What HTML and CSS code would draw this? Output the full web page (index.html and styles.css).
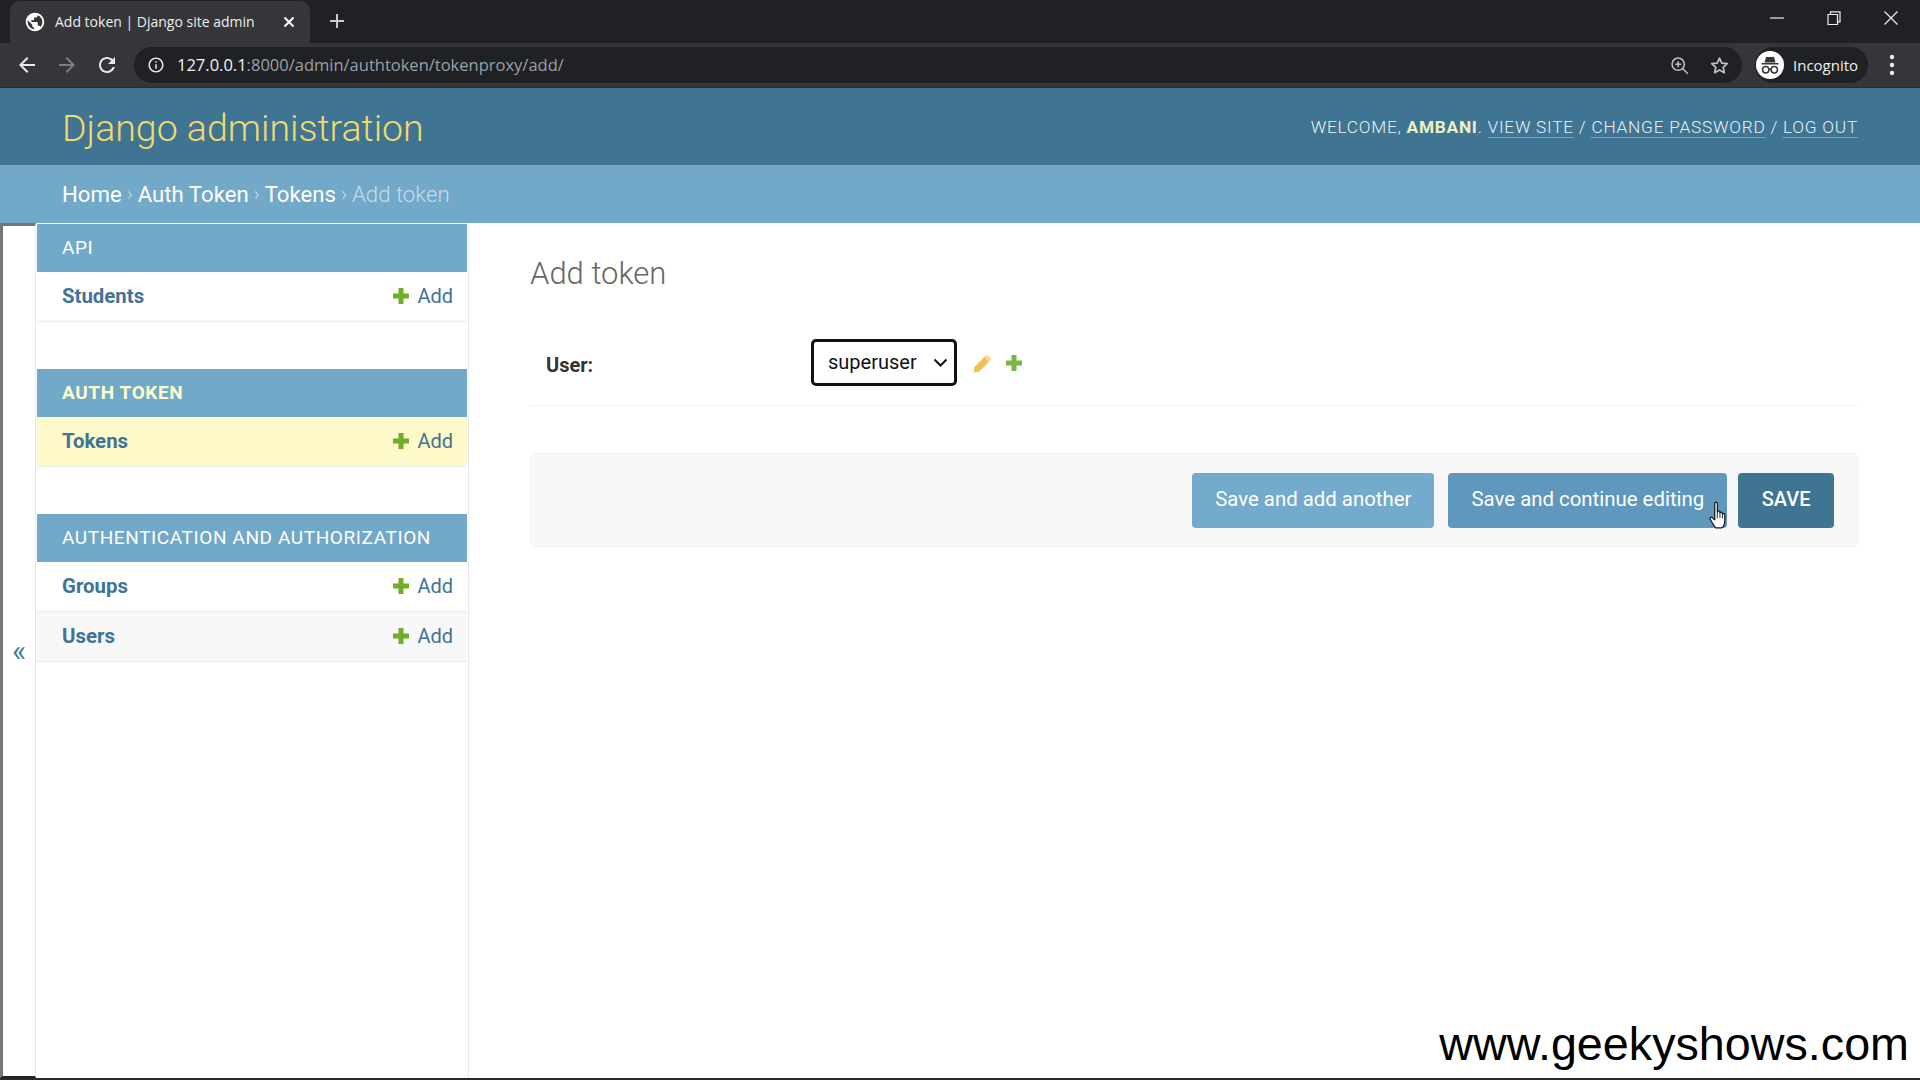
FILE: index.html
```html
<!DOCTYPE html>
<html lang="en">
<head>
<meta charset="UTF-8">
<title>Add token | Django site admin</title>
<link rel="stylesheet" href="styles.css">
</head>
<body>
<div class="tabstrip">
    <div class="tab">
        <svg class="tab-favicon" viewBox="0 0 24 24"><path fill="#fff" d="M12 2C6.48 2 2 6.48 2 12s4.48 10 10 10 10-4.48 10-10S17.52 2 12 2zm-1 17.93c-3.95-.49-7-3.85-7-7.93 0-.62.08-1.21.21-1.79L9 15v1c0 1.1.9 2 2 2v1.93zm6.9-2.54c-.26-.81-1-1.39-1.9-1.39h-1v-3c0-.55-.45-1-1-1H8v-2h2c.55 0 1-.45 1-1V7h2c1.1 0 2-.9 2-2v-.41c2.93 1.19 5 4.06 5 7.41 0 2.08-.8 3.97-2.1 5.39z"/></svg>
        <span class="tab-title">Add token | Django site admin</span>
        <svg class="tab-close" viewBox="0 0 12 12"><path d="M1.5 1.5l9 9M10.5 1.5l-9 9" stroke="#fff" stroke-width="2" fill="none"/></svg>
    </div>
    <svg class="new-tab" viewBox="0 0 16 16"><path d="M8 1v14M1 8h14" stroke="#c8cacd" stroke-width="2" fill="none"/></svg>
    <div class="window-btns">
        <svg viewBox="0 0 14 14"><path d="M0 7h14" stroke="#eee" stroke-width="1.2"/></svg>
        <svg viewBox="0 0 14 14"><path d="M1 3.5h9.500v10H1zM3.500 3.500V.8H13v10h-2.800" stroke="#eee" stroke-width="1.200" fill="none"/></svg>
        <svg viewBox="0 0 14 14"><path d="M.5.500l13 13M13.500.500l-13 13" stroke="#eee" stroke-width="1.200" fill="none"/></svg>
    </div>
</div>
<div class="toolbar">
    <svg class="nav-icon" viewBox="0 0 24 24"><path fill="#e8eaed" d="M20 11H7.830l5.590-5.590L12 4l-8 8 8 8 1.410-1.410L7.830 13H20v-2z"/></svg>
    <svg class="nav-icon dim" viewBox="0 0 24 24"><path fill="#7c7e81" d="M12 4l-1.410 1.410L16.170 11H4v2h12.170l-5.580 5.590L12 20l8-8z"/></svg>
    <svg class="nav-icon" viewBox="0 0 24 24"><path fill="#e8eaed" d="M17.650 6.350C16.200 4.900 14.210 4 12 4c-4.420 0-7.990 3.580-7.990 8s3.570 8 7.990 8c3.730 0 6.840-2.550 7.730-6h-2.080c-.82 2.330-3.040 4-5.650 4-3.310 0-6-2.690-6-6s2.690-6 6-6c1.660 0 3.140.69 4.220 1.780L13 11h7V4l-2.350 2.350z"/></svg>
    <div class="omnibox">
        <svg class="info-icon" viewBox="0 0 24 24"><path fill="#e8eaed" d="M11 7h2v2h-2zm0 4h2v6h-2zm1-9C6.480 2 2 6.480 2 12s4.480 10 10 10 10-4.480 10-10S17.520 2 12 2zm0 18c-4.410 0-8-3.590-8-8s3.590-8 8-8 8 3.590 8 8-3.590 8-8 8z"/></svg>
        <span class="url"><span class="url-host">127.0.0.1</span>:8000/admin/authtoken/tokenproxy/add/</span>
        <svg class="omni-icon" viewBox="0 0 24 24"><path d="M10.500 3.500a7 7 0 1 0 0 14 7 7 0 0 0 0-14zM15.500 15.500l6 6M10.500 7v7M7 10.500h7" stroke="#bdc1c6" stroke-width="1.800" fill="none"/></svg>
        <svg class="omni-icon" viewBox="0 0 24 24"><path d="M12 3.500l2.600 5.700 6.200.7-4.600 4.200 1.300 6.100-5.500-3.100-5.500 3.100 1.300-6.100-4.600-4.200 6.200-.7z" stroke="#bdc1c6" stroke-width="2" fill="none" stroke-linejoin="round"/></svg>
    </div>
    <div class="profile">
        <svg class="profile-icon" viewBox="0 0 28 28">
            <circle cx="14" cy="14" r="14" fill="#fff"/>
            <path fill="#35363a" d="M10 6h8l1.500 5.500H8.500zM5.500 12h17v1.400h-17z"/>
            <circle cx="9.700" cy="18.700" r="3.200" fill="none" stroke="#35363a" stroke-width="1.500"/>
            <circle cx="18.300" cy="18.700" r="3.200" fill="none" stroke="#35363a" stroke-width="1.500"/>
            <path d="M12.900 18.300h2.200" stroke="#35363a" stroke-width="1.500"/>
        </svg>
        <span>Incognito</span>
    </div>
    <svg class="menu-dots" viewBox="0 0 6 22"><circle cx="3" cy="3" r="2.200" fill="#e8eaed"/><circle cx="3" cy="11" r="2.200" fill="#e8eaed"/><circle cx="3" cy="19" r="2.200" fill="#e8eaed"/></svg>
</div>

<header class="site-header">
    <div class="branding">Django administration</div>
    <div class="user-tools">
        Welcome, <strong>ambani</strong>.
        <a href="#">View site</a> /
        <a href="#">Change password</a> /
        <a href="#">Log out</a>
    </div>
</header>
<div class="breadcrumbs">
    <a href="#">Home</a> <span class="sep">›</span> <a href="#">Auth Token</a> <span class="sep">›</span> <a href="#">Tokens</a> <span class="sep">›</span> Add token
</div>

<div class="main">
    <button class="toggle-nav" type="button">«</button>
    <nav class="sidebar">
        <div class="module">
            <div class="caption">API</div>
            <div class="model-row">
                <a class="model-name" href="#">Students</a>
                <a class="add-link" href="#"><svg class="plus" viewBox="0 0 16 16"><path d="M8 0v16M0 8h16" stroke="#6fad2a" stroke-width="5" fill="none"/></svg>Add</a>
            </div>
        </div>
        <div class="module">
            <div class="caption current">Auth Token</div>
            <div class="model-row selected">
                <a class="model-name" href="#">Tokens</a>
                <a class="add-link" href="#"><svg class="plus" viewBox="0 0 16 16"><path d="M8 0v16M0 8h16" stroke="#6fad2a" stroke-width="5" fill="none"/></svg>Add</a>
            </div>
        </div>
        <div class="module">
            <div class="caption">Authentication and Authorization</div>
            <div class="model-row">
                <a class="model-name" href="#">Groups</a>
                <a class="add-link" href="#"><svg class="plus" viewBox="0 0 16 16"><path d="M8 0v16M0 8h16" stroke="#6fad2a" stroke-width="5" fill="none"/></svg>Add</a>
            </div>
            <div class="model-row alt">
                <a class="model-name" href="#">Users</a>
                <a class="add-link" href="#"><svg class="plus" viewBox="0 0 16 16"><path d="M8 0v16M0 8h16" stroke="#6fad2a" stroke-width="5" fill="none"/></svg>Add</a>
            </div>
        </div>
    </nav>
    <div class="content">
        <h1>Add token</h1>
        <form>
            <div class="form-row">
                <label class="field-label" for="id_user">User:</label>
                <div class="select-wrap">
                    <select class="user-select" id="id_user">
                        <option>superuser</option>
                    </select>
                    <svg class="select-arrow" viewBox="0 0 14 9"><path d="M1 1.500l6 6 6-6" stroke="#111" stroke-width="2" fill="none"/></svg>
                </div>
                <svg class="pencil" viewBox="0 0 18 18"><path fill="#f2c04e" d="M.5 17.500L1.500 12 10.800 2.700l4.500 4.500L6 16.500z"/><path fill="#f7dc8c" d="M11.800 1.700c.9-.9 1.900-.9 2.600-.2l2.100 2.100c.7.700.7 1.700-.2 2.600l-.9.900-4.500-4.500z"/></svg>
                <svg class="plus form-plus" viewBox="0 0 16 16"><path d="M8 0v16M0 8h16" stroke="#7ab648" stroke-width="5" fill="none"/></svg>
            </div>
            <div class="submit-row">
                <input class="btn" type="submit" value="Save and add another">
                <input class="btn btn-hover" type="submit" value="Save and continue editing">
                <input class="btn btn-default" type="submit" value="SAVE">
            </div>
        </form>
    </div>
</div>
<div class="bottom-bar"></div>

<svg class="cursor" viewBox="0 0 18 26"><path d="M6 2c0-1.300 2.400-1.300 2.400 0v8c.3-1.200 2.300-1.200 2.400 0v1c.3-1 2.200-1 2.300.2v1c.4-.8 2.100-.7 2.200.5v5.800c0 2.500-1.400 5.500-3 6.500H7c-1.800-1.500-3.200-4.500-5.200-8-.8-1.400.9-2.600 2-1.400L6 17.500z" fill="#fff" stroke="#111" stroke-width="1.100" stroke-linejoin="round"/><path d="M8.400 10v6M10.800 11v5M13.100 12.200v4" stroke="#111" stroke-width=".8"/></svg>
<div class="watermark">www.geekyshows.com</div>
</body>
</html>
```

FILE: styles.css
```css
* {
    box-sizing: border-box;
}
html, body {
    height: 100%;
}
body {
    margin: 0;
    display: flex;
    flex-direction: column;
    overflow: hidden;
    background: #fff;
    color: #333;
    font-family: Roboto, "Liberation Sans", sans-serif;
    position: relative;
}
a {
    text-decoration: none;
}

/* browser frame */
.tabstrip {
    height: 43px;
    flex: none;
    display: flex;
    align-items: flex-end;
    background: #202124;
    padding-left: 10px;
}
.tab {
    width: 300px;
    height: 42px;
    display: flex;
    align-items: center;
    background: #35363a;
    border-radius: 10px 10px 0 0;
    padding: 0 15px 1px 15px;
}
.tab-favicon {
    width: 22px;
    height: 22px;
    margin-left: -1px;
}
.tab-title {
    margin-left: 9px;
    color: #eee;
    font: 14px "Open Sans", sans-serif;
    flex: 1;
    white-space: nowrap;
}
.tab-close {
    width: 12px;
    height: 12px;
}
.new-tab {
    width: 16px;
    height: 16px;
    margin: 0 0 14px 19px;
}
.window-btns {
    margin-left: auto;
    align-self: flex-start;
    display: flex;
    gap: 43px;
    padding: 11px 22px 0 0;
}
.window-btns svg {
    width: 14px;
    height: 14px;
}
.toolbar {
    height: 45px;
    flex: none;
    display: flex;
    align-items: center;
    background: #35363a;
    padding-left: 15px;
    border-bottom: 1px solid #2b2c2f;
}
.nav-icon {
    width: 24px;
    height: 24px;
    margin-right: 16px;
}
.omnibox {
    width: 1608px;
    height: 36px;
    margin-left: -1px;
    display: flex;
    align-items: center;
    background: #202124;
    border-radius: 18px;
    padding: 0 12px 0 13px;
}
.info-icon {
    width: 18px;
    height: 18px;
}
.url {
    margin-left: 12px;
    padding-bottom: 1px;
    color: #9aa0a6;
    font: 16.500px "Open Sans", sans-serif;
    flex: 1;
}
.url-host {
    color: #f1f3f4;
}
.omni-icon {
    width: 21px;
    height: 21px;
    margin-left: 19px;
}
.profile {
    width: 113px;
    height: 36px;
    margin-left: 13px;
    display: flex;
    align-items: center;
    gap: 9px;
    background: #202124;
    border-radius: 18px;
    color: #eee;
    font: 15px "Open Sans", sans-serif;
    padding-left: 1px;
}
.profile-icon {
    width: 28px;
    height: 28px;
}
.menu-dots {
    width: 6px;
    height: 22px;
    margin-left: 21px;
}

/* django header */
.site-header {
    height: 77px;
    flex: none;
    display: flex;
    align-items: center;
    justify-content: space-between;
    padding: 2px 62px 0 62px;
    background: #3f7493;
}
.branding {
    color: #f0da6e;
    font-size: 37.500px;
    font-weight: 300;
}
.user-tools {
    margin-bottom: 2px;
    color: #fff;
    opacity: .9;
    font-size: 17.300px;
    font-weight: 300;
    letter-spacing: .75px;
    text-transform: uppercase;
}
.user-tools strong {
    color: #ffc;
    font-weight: 700;
}
.user-tools a {
    color: #fff;
    border-bottom: 1px solid #79aec8;
}
.breadcrumbs {
    height: 58px;
    flex: none;
    display: flex;
    align-items: center;
    gap: 5px;
    padding-left: 62px;
    background: #72a9c8;
    color: #c4dce8;
    font-size: 22.200px;
    font-weight: 300;
}
.breadcrumbs a {
    color: #fff;
    font-weight: 400;
}
.sep {
    font-size: 20px;
}

/* page body */
.main {
    flex: 1;
    display: flex;
    min-height: 0;
}
.toggle-nav {
    width: 36px;
    flex: none;
    padding: 0 0 2px;
    background: #fff;
    color: #447e9b;
    font-family: Roboto, sans-serif;
    font-size: 30px;
    border-style: solid;
    border-width: 3px 1px 2px 3px;
    border-color: #767676 #e8e8e8 #222 #767676;
}
.sidebar {
    width: 433px;
    flex: none;
    padding: 1px 1px 0 1px;
    border-right: 1px solid #eaeaea;
}
.module {
    margin-bottom: 47px;
}
.caption {
    height: 48px;
    display: flex;
    align-items: center;
    padding: 0 0 2px 25px;
    background: #72a9c8;
    color: #fff;
    font-size: 19px;
    letter-spacing: .6px;
    text-transform: uppercase;
}
.caption.current {
    color: #ffc;
    font-weight: 700;
}
.model-row {
    height: 50px;
    display: flex;
    align-items: center;
    justify-content: space-between;
    padding: 0 14px 2px 25px;
    border-bottom: 1px solid #eaeaea;
    font-size: 20px;
}
.model-row.selected {
    background: #fdf9c8;
}
.model-row.alt {
    background: #f8f8f8;
}
.model-name {
    color: #417396;
    font-size: 20.400px;
    font-weight: 700;
}
.add-link {
    display: flex;
    align-items: center;
    color: #417396;
}
.plus {
    width: 16px;
    height: 16px;
    margin-right: 8px;
}
.content {
    flex: 1;
    padding: 0 62px 0 61px;
}
h1 {
    margin: 0;
    padding-top: 30px;
    height: 100px;
    color: #666;
    font-size: 31px;
    font-weight: 300;
    line-height: 42px;
}
.form-row {
    height: 83px;
    display: flex;
    align-items: center;
    padding: 0 0 2px 16px;
    border-bottom: 1px solid #eee;
}
.field-label {
    width: 265px;
    padding-top: 3px;
    color: #333;
    font-size: 20px;
    font-weight: 700;
}
.select-wrap {
    position: relative;
    display: flex;
    margin-top: -2px;
}
.user-select {
    width: 146px;
    height: 47px;
    padding: 0 0 0 14px;
    appearance: none;
    background: #fff;
    color: #111;
    border: 3px solid #111;
    border-radius: 5px;
    outline: none;
    font-family: Roboto, sans-serif;
    font-size: 20px;
}
.select-arrow {
    position: absolute;
    right: 9px;
    top: 19px;
    width: 15px;
    height: 9px;
}
.pencil {
    width: 19px;
    height: 19px;
    margin-left: 16px;
}
.form-plus {
    margin: 0 0 0 14px;
}
.submit-row {
    height: 94px;
    margin-top: 47px;
    display: flex;
    align-items: center;
    justify-content: flex-end;
    padding-right: 23px;
    background: #f8f8f8;
    border: 1px solid #f2f2f2;
    border-radius: 4px;
}
.btn {
    height: 55px;
    padding: 0 23px 2px;
    background: #74aacb;
    color: #fff;
    border: 0;
    border-radius: 4px;
    font-family: Roboto, sans-serif;
    font-size: 20.400px;
}
.btn-hover {
    background: #5f97bd;
    margin-left: 14px;
}
.btn-default {
    padding: 0 23.500px 2px;
    background: #3f7493;
    font-size: 20px;
    font-weight: 500;
    margin-left: 11px;
}
.bottom-bar {
    height: 2px;
    flex: none;
    background: #2a2a2c;
}

/* sits on top of the page in the video */
.cursor {
    position: absolute;
    left: 1708px;
    top: 501px;
    width: 20px;
    height: 28px;
}
.watermark {
    position: absolute;
    right: 11px;
    bottom: 12px;
    color: #000;
    font-family: "Liberation Sans", sans-serif;
    font-size: 46.700px;
    line-height: 1;
}
```
